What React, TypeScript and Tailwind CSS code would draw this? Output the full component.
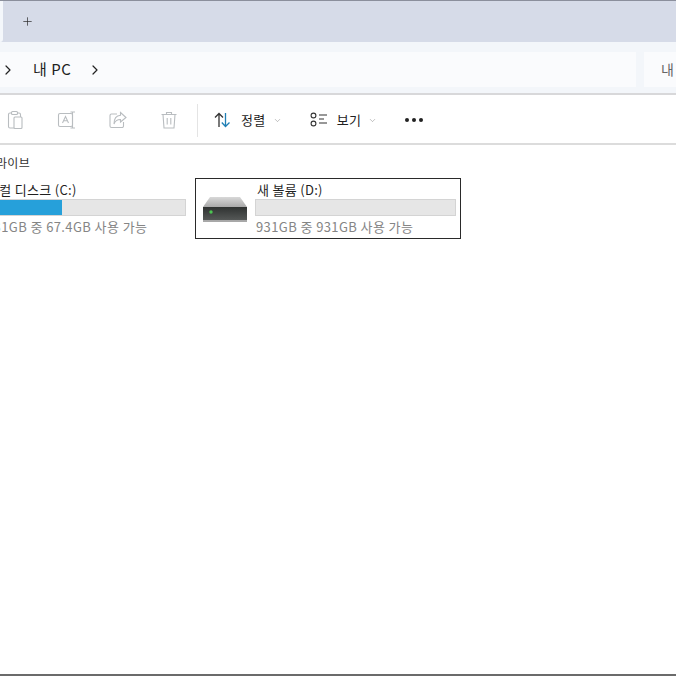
import { ChevronDown, ChevronRight, Plus } from 'lucide-react'

const fontStack = { fontFamily: '"Noto Sans CJK KR", "Liberation Sans", sans-serif' }

function ToolIcon({ children }: { children: React.ReactNode }) {
  return (
    <svg width="20" height="20" viewBox="0 0 20 20" fill="none" stroke="#b9bdc0" strokeWidth="1.1" className="shrink-0">
      {children}
    </svg>
  )
}

function DriveIcon() {
  return (
    <svg width="46" height="28" viewBox="0 0 46 28" className="mt-[2px] shrink-0">
      <defs>
        <linearGradient id="driveTop" x1="0" y1="0" x2="0" y2="1">
          <stop offset="0" stopColor="#d8d8d8" />
          <stop offset="1" stopColor="#a9a9a9" />
        </linearGradient>
        <linearGradient id="driveFront" x1="0" y1="0" x2="0" y2="1">
          <stop offset="0" stopColor="#2f3231" />
          <stop offset="1" stopColor="#555857" />
        </linearGradient>
      </defs>
      <path d="M8 1 H38 L45 11 H1 Z" fill="url(#driveTop)" />
      <rect x="1" y="11" width="44" height="13" fill="url(#driveFront)" />
      <rect x="1" y="24" width="44" height="2" fill="#a8a8a8" />
      <circle cx="9" cy="16" r="1.7" fill="#4cc552" />
    </svg>
  )
}

function DriveCard({ name, free, percent, selected }: { name: string; free: string; percent: number; selected?: boolean }) {
  return (
    <div className={`flex h-[61px] w-[266px] shrink-0 items-center border pr-[4px] pl-[6px] ${selected ? 'border-[#2a2a2a]' : 'border-transparent'}`}>
      <DriveIcon />
      <div className="ml-[7px] min-w-0 flex-1">
        <div className="ml-[2px] h-[19px] text-[13px] leading-[19px] tracking-[0.3px] whitespace-nowrap text-[#1f1f1f]">{name}</div>
        <div className="h-[17px] border border-[#d4d4d4] bg-[#e6e6e6]">
          <div className="h-full bg-[#26a0da]" style={{ width: `${percent}%` }} />
        </div>
        <div className="mt-[1px] ml-[1px] h-[20px] text-[13px] leading-[20px] tracking-[0.4px] whitespace-nowrap text-[#858585]">{free}</div>
      </div>
    </div>
  )
}

export default function App() {
  return (
    <div className="flex h-[676px] w-[676px] flex-col overflow-hidden bg-white" style={fontStack}>
      <div className="h-[1px] shrink-0 bg-[#8b8f9c]" />

      {/* Tab strip */}
      <div className="flex h-[41px] shrink-0 items-center bg-[#d6dbe8]">
        <div className="h-full w-[3px] rounded-br-md bg-[#f4f7fb]" />
        <Plus size={13} strokeWidth={1.3} className="ml-[18px] text-[#2b2b2b]" />
      </div>

      {/* Address bar */}
      <div className="flex h-[53px] shrink-0 items-center gap-[8px] border-b-2 border-[#d8d8da] bg-[#f3f6fa] pt-[10px] pb-[6px]">
        <div className="flex h-full w-[636px] items-center bg-[#fafbfd]">
          <ChevronRight size={16} strokeWidth={1.8} className="ml-[0px] text-[#222]" />
          <span className="ml-[17px] text-[15px] tracking-[0.5px] text-[#222]">내 PC</span>
          <ChevronRight size={16} strokeWidth={1.8} className="ml-[16px] text-[#222]" />
        </div>
        <div className="flex h-full flex-1 items-center bg-[#fafbfd] pl-[17px] text-[14px] whitespace-nowrap text-[#666]">내</div>
      </div>

      {/* Command bar */}
      <div className="flex h-[50px] shrink-0 items-center border-b-2 border-[#dcdcdc] bg-white pt-[2px]">
        <div className="ml-[6px] flex w-[172px] items-center gap-[31px]">
          <ToolIcon>
            <rect x="2.5" y="3" width="12" height="15" rx="1.5" />
            <rect x="8" y="7" width="8" height="11.5" rx="1" fill="#fff" />
            <rect x="5.5" y="1.5" width="6" height="3" rx="1" fill="#fff" />
          </ToolIcon>
          <ToolIcon>
            <rect x="1.5" y="3.5" width="14" height="13" rx="1.5" />
            <path d="M5.5 13 L8.5 6.5 L11.5 13 M6.6 10.8 H10.4" />
            <path d="M15.5 2 V18 M13.5 2 H18 M13.5 18 H18" />
          </ToolIcon>
          <ToolIcon>
            <path d="M9 4 H3.5 A1.5 1.5 0 0 0 2 5.5 V16 A1.5 1.5 0 0 0 3.5 17.5 H14 A1.5 1.5 0 0 0 15.5 16 V12" />
            <path d="M12.5 2.5 L18 7.5 L12.5 12 V9.5 C9 9.5 7 11 6 14 C6 9 8 5.5 12.5 5.2 Z" />
          </ToolIcon>
          <ToolIcon>
            <path d="M2.5 4.5 H17.5 M7.5 4.5 V2.5 H12.5 V4.5" />
            <path d="M4 4.5 L5 18 H15 L16 4.5" />
            <path d="M8.2 8 V14.5 M11.8 8 V14.5" />
          </ToolIcon>
        </div>
        <div className="ml-[19px] h-[33px] w-px bg-[#e4e4e4]" />
        <svg width="18" height="18" viewBox="0 0 18 18" fill="none" strokeWidth="1.3" className="ml-[15px] shrink-0">
          <path d="M6 16 V2.5 M2 6.5 L6 2.5 L10 6.5" stroke="#333" />
          <path d="M12.5 2 V15.5 M8.8 11.5 L12.5 15.5 L16.5 11.5" stroke="#1f7fb5" />
        </svg>
        <span className="ml-[10px] text-[13px] tracking-[0.4px] text-[#222]">정렬</span>
        <ChevronDown size={9} strokeWidth={1.2} className="ml-[7px] text-[#777]" />
        <svg width="18" height="16" viewBox="0 0 18 16" fill="none" stroke="#333" strokeWidth="1.1" className="ml-[28px] shrink-0">
          <circle cx="3.5" cy="3.5" r="2.4" />
          <circle cx="3.5" cy="11.5" r="2.4" />
          <path d="M9 3 H17 M9 7 H14 M9 11 H17" />
        </svg>
        <span className="ml-[9px] text-[13px] tracking-[0.4px] text-[#222]">보기</span>
        <ChevronDown size={9} strokeWidth={1.2} className="ml-[7px] text-[#777]" />
        <div className="ml-[28px] flex gap-[3px]">
          <span className="size-[4px] rounded-full bg-[#222]" />
          <span className="size-[4px] rounded-full bg-[#222]" />
          <span className="size-[4px] rounded-full bg-[#222]" />
        </div>
      </div>

      {/* Drives */}
      <div className="min-h-0 flex-1 overflow-hidden">
        <div className="mt-[8px] ml-[-78px] h-[24px] text-[12px] leading-[20px] tracking-[0.3px] whitespace-nowrap text-[#333]">디바이스 및 드라이브</div>
        <div className="ml-[-75px] flex gap-[4px] pt-[1px]">
          <DriveCard name="로컬 디스크 (C:)" free="931GB 중 67.4GB 사용 가능" percent={38} />
          <DriveCard name="새 볼륨 (D:)" free="931GB 중 931GB 사용 가능" percent={0} selected />
        </div>
      </div>

      <div className="h-[2px] shrink-0 bg-[#6b6b6b]" />
    </div>
  )
}
